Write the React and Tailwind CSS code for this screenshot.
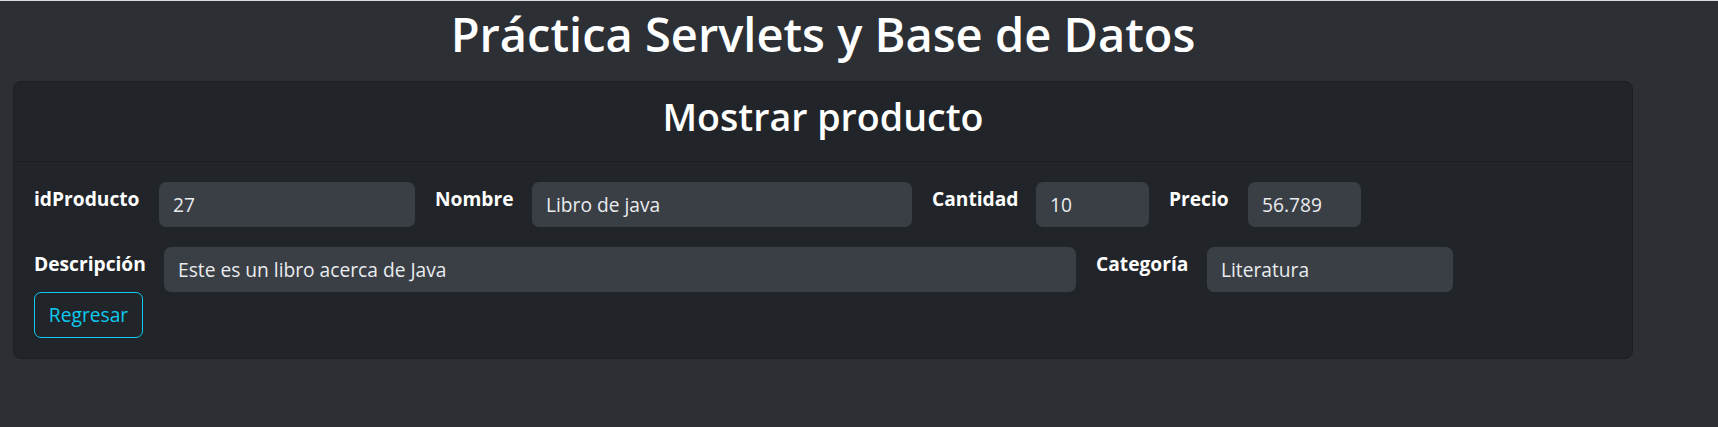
import React from 'react'

const Field = ({ label, labelW, inputW, value }) => (
  <>
    <label className={`${labelW} shrink-0 whitespace-nowrap mt-[3px] text-[19.2px] leading-[28.8px] font-bold text-white`}>
      {label}
    </label>
    <input
      readOnly
      value={value}
      className={`${inputW} shrink-0 h-[45px] rounded-[7px] bg-[#3a3e45] px-[14px] text-[19.2px] leading-[28.8px] text-[#e9ecef] outline-none`}
    />
  </>
)

const App = () => {
  return (
    <div className="min-h-screen bg-[#2c3035] border-t border-[#dcdcdc] font-['Open_Sans',sans-serif]">
      <div className="w-[1646px] px-[13px]">
        {/* Titulo */}
        <h1 className="pt-[4px] mb-[18px] text-center text-[47px] leading-[58px] font-semibold text-white">
          Práctica Servlets y Base de Datos
        </h1>

        {/* Card */}
        <div className="rounded-[8px] border border-[#1b1e22] bg-[#212529]">
          <div className="h-[80px] pb-[10px] border-b border-[#1b1e22] flex items-center justify-center">
            <h2 className="text-[37.6px] leading-[46px] font-semibold text-white">Mostrar producto</h2>
          </div>

          <div className="pt-[20px] pb-[20px] pl-[20px] pr-[20px]">
            <div className="flex items-start">
              <div className="flex items-start gap-[21px]">
                <Field label="idProducto" labelW="w-[104px]" inputW="w-[256px]" value="27" />
              </div>
              <div className="flex items-start gap-[20px] ml-[20px]">
                <Field label="Nombre" labelW="w-[77px]" inputW="w-[380px]" value="Libro de java" />
              </div>
              <div className="flex items-start gap-[21px] ml-[20px]">
                <Field label="Cantidad" labelW="w-[83px]" inputW="w-[113px]" value="10" />
              </div>
              <div className="flex items-start gap-[21px] ml-[20px]">
                <Field label="Precio" labelW="w-[58px]" inputW="w-[113px]" value="56.789" />
              </div>
            </div>

            <div className="flex items-start mt-[20px]">
              <div className="flex items-start gap-[21px]">
                <Field label="Descripción" labelW="w-[109px]" inputW="w-[912px]" value="Este es un libro acerca de Java" />
              </div>
              <div className="flex items-start gap-[21px] ml-[20px]">
                <Field label="Categoría" labelW="w-[90px]" inputW="w-[246px]" value="Literatura" />
              </div>
            </div>

            <button className="block w-[109px] h-[46px] rounded-[7px] border border-[#0dcaf0] text-[#0dcaf0] text-[19.2px] leading-[28.8px]">
              Regresar
            </button>
          </div>
        </div>
      </div>
    </div>
  )
}

export default App
